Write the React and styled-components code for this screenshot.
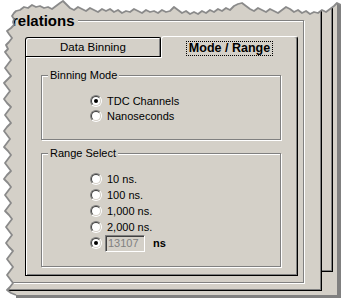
import React from 'react';
import styled, { createGlobalStyle } from 'styled-components';

const face = '#d4d0c8';

const GlobalStyle = createGlobalStyle`
  html, body {
    margin: 0;
    padding: 0;
    background: #fff;
  }
  body {
    font-family: "Liberation Sans", Arial, sans-serif;
    color: #000;
  }
`;

// jagged edge of the torn screenshot
const topEdge = [
  [341, 5], [337, 3], [334, 6], [330, 9], [326, 12], [322, 10], [318, 13], [314, 12], [310, 14],
  [306, 11], [302, 13], [298, 10], [294, 12], [290, 9], [286, 7], [282, 10], [278, 13], [274, 11],
  [270, 9], [266, 12], [262, 10], [258, 8], [254, 11], [250, 9], [246, 6], [242, 3], [238, 4],
  [234, 6], [230, 10], [226, 8], [222, 11], [218, 9], [214, 12], [210, 10], [206, 13], [202, 11],
  [198, 14], [194, 12], [190, 14], [186, 11], [182, 13], [178, 10], [174, 7], [170, 11], [166, 12],
  [162, 10], [158, 13], [154, 11], [150, 12], [146, 10], [142, 13], [138, 11], [134, 9], [130, 12],
  [126, 11], [122, 13], [118, 10], [114, 12], [110, 9], [106, 11], [102, 9], [98, 12], [94, 10],
  [90, 8], [86, 11], [82, 9], [78, 7], [74, 10], [70, 8], [66, 4], [63, 1], [60, 3], [56, 6],
  [52, 9], [48, 7], [44, 8], [40, 6], [36, 7], [32, 5], [28, 8], [24, 7], [20, 10], [16, 11], [14, 13],
];

const leftEdge = [
  [12, 16], [14, 19], [13, 22], [14, 25], [11, 28], [7, 31], [9, 34], [12, 38], [9, 42], [6, 45], [8, 49],
  [5, 52], [8, 56], [11, 60], [8, 64], [5, 68], [8, 72], [11, 76], [8, 79], [4, 83], [7, 87],
  [10, 91], [7, 95], [4, 99], [7, 103], [11, 107], [8, 111], [5, 115], [8, 119], [11, 123],
  [7, 127], [4, 131], [7, 135], [10, 139], [7, 143], [4, 147], [8, 151], [11, 155], [8, 159],
  [5, 163], [8, 167], [11, 171], [7, 175], [4, 179], [8, 183], [11, 187], [8, 191], [5, 195],
  [8, 199], [11, 203], [8, 207], [5, 211], [9, 215], [12, 219], [9, 223], [6, 227], [9, 231],
  [12, 235], [9, 239], [6, 243], [9, 247], [13, 251], [10, 255], [7, 259], [10, 263], [13, 267],
  [10, 271], [7, 275], [10, 279], [13, 283], [10, 287], [7, 290], [11, 293], [16, 295],
];

const edge = [...topEdge, ...leftEdge];
const pts = edge.map(([x, y]) => `${x},${y}`).join(' ');
const fillPath = `M0,0 L341,0 L${edge.map(([x, y]) => `${x},${y}`).join(' L')} L16,298 L0,298 Z`;

const Desk = styled.div`
  position: relative;
  width: 341px;
  height: 298px;
  overflow: hidden;
  background: #fff;
`;

const Paper = styled.div`
  box-sizing: border-box;
  width: 341px;
  height: 298px;
  background: ${face};
  border-right: 4px solid #808080;
  border-bottom: 3px solid #808080;
  display: grid;
  align-items: start;
  justify-items: start;
`;

const Window = styled.div`
  grid-area: 1 / 1;
  box-sizing: border-box;
  width: ${p => p.$w}px;
  height: ${p => p.$h}px;
  background: ${face};
  border-right: 1px solid #000;
  border-bottom: 1px solid #000;
  box-shadow: inset -1px -1px #808080;
  display: flex;
  flex-direction: column;
  align-items: flex-start;
`;

const Frame = styled.div`
  box-sizing: border-box;
  margin: 20px 0 0 -6px;
  width: 310px;
  height: 263px;
  border: 1px solid #808080;
  box-shadow: inset 1px 1px #fff, 1px 1px #fff;
  display: flex;
  flex-direction: column;
  align-items: flex-start;
`;

const FrameTitle = styled.div`
  margin: -9px 0 0 14px;
  padding: 0 3px;
  background: ${face};
  font-size: 15px;
  font-weight: bold;
  line-height: 17px;
`;

const Tabs = styled.div`
  margin: 7px 0 0 30px;
  width: 273px;
  height: 240px;
  display: flex;
  flex-direction: column;
`;

const TabStrip = styled.div`
  height: 20px;
  display: flex;
  align-items: flex-end;
`;

const Tab = styled.div`
  box-sizing: border-box;
  display: flex;
  align-items: center;
  justify-content: center;
  background: ${face};
  font-size: 11.5px;
  width: 136px;
  height: 19px;
  border: 1px solid #000;
  border-bottom: none;
  border-radius: 3px 2px 0 0;
  box-shadow: inset 1px 1px #fff, inset -1px 0 #808080;
`;

const ActiveTab = styled.div`
  box-sizing: border-box;
  position: relative;
  z-index: 1;
  display: flex;
  align-items: center;
  justify-content: center;
  padding-top: 1px;
  width: 137px;
  height: 22px;
  margin-bottom: -2px;
  background: ${face};
  border-top: 1px solid #fff;
  border-left: 1px solid #fff;
  border-right: 1px solid #000;
  border-radius: 3px 3px 0 0;
  box-shadow: inset -1px 0 #808080;
  font-size: 12.5px;
  font-weight: bold;
`;

const Focus = styled.span`
  padding: 0 2px;
  line-height: 13px;
  outline: 1px dotted #000;
`;

const Panel = styled.div`
  box-sizing: border-box;
  flex: 1;
  border: 1px solid #000;
  box-shadow: inset 1px 1px #fff, inset -1px -1px #808080;
  padding: 18px 0 0 15px;
  display: flex;
  flex-direction: column;
  gap: 13px;
`;

const Group = styled.div`
  box-sizing: border-box;
  width: 240px;
  height: ${p => p.$h}px;
  border: 1px solid #808080;
  box-shadow: inset 1px 1px #fff, 1px 1px #fff;
  display: flex;
  flex-direction: column;
  align-items: flex-start;
`;

const GroupTitle = styled.div`
  margin: -7px 0 0 6px;
  padding: 0 2px;
  background: ${face};
  font-size: 11px;
  line-height: 13px;
`;

const Options = styled.div`
  margin-top: ${p => p.$top}px;
  padding-left: 48px;
  display: flex;
  flex-direction: column;
`;

const Row = styled.div`
  height: ${p => p.$h}px;
  display: flex;
  align-items: center;
  font-size: 11px;
`;

const RadioOuter = styled.span`
  box-sizing: border-box;
  width: 12px;
  height: 12px;
  flex: none;
  border-radius: 50%;
  border: 1px solid;
  border-color: #808080 #fff #fff #808080;
  display: flex;
`;

const RadioInner = styled.span`
  box-sizing: border-box;
  flex: 1;
  border-radius: 50%;
  border: 1px solid;
  border-color: #404040 ${face} ${face} #404040;
  background: #fff;
  display: flex;
  align-items: center;
  justify-content: center;
`;

const Dot = styled.span`
  width: 4px;
  height: 4px;
  border-radius: 50%;
  background: #000;
`;

const RadioText = styled.span`
  margin-left: 5px;
`;

const Field = styled.span`
  box-sizing: border-box;
  margin-left: 3px;
  width: 40px;
  height: 17px;
  border: 1px solid;
  border-color: #808080 #fff #fff #808080;
  box-shadow: inset 1px 1px #404040, inset -1px -1px ${face};
  background: ${face};
  color: #808080;
  font-size: 11px;
  line-height: 15px;
  padding-left: 2px;
`;

const Unit = styled.span`
  margin-left: 8px;
  font-weight: bold;
`;

const Torn = styled.svg`
  position: absolute;
  left: 0;
  top: 0;
  pointer-events: none;
`;

const Radio = ({ checked }) => (
  <RadioOuter>
    <RadioInner>{checked && <Dot />}</RadioInner>
  </RadioOuter>
);

const Option = ({ checked, label, h }) => (
  <Row $h={h}>
    <Radio checked={checked} />
    <RadioText>{label}</RadioText>
  </Row>
);

export default function App() {
  return (
    <>
      <GlobalStyle />
      <Desk>
        <Paper>
          <Window $w={333} $h={272} />
          <Window $w={322} $h={291}>
            <Frame>
              <FrameTitle>relations</FrameTitle>
              <Tabs>
                <TabStrip>
                  <Tab>Data Binning</Tab>
                  <ActiveTab>
                    <Focus>Mode / Range</Focus>
                  </ActiveTab>
                </TabStrip>
                <Panel>
                  <Group $h={65}>
                    <GroupTitle>Binning Mode</GroupTitle>
                    <Options $top={11}>
                      <Option h={15} checked label="TDC Channels" />
                      <Option h={15} label="Nanoseconds" />
                    </Options>
                  </Group>
                  <Group $h={114}>
                    <GroupTitle>Range Select</GroupTitle>
                    <Options $top={11}>
                      <Option h={16} label="10 ns." />
                      <Option h={16} label="100 ns." />
                      <Option h={16} label="1,000 ns." />
                      <Option h={16} label="2,000 ns." />
                      <Row $h={16}>
                        <Radio checked />
                        <Field>13107</Field>
                        <Unit>ns</Unit>
                      </Row>
                    </Options>
                  </Group>
                </Panel>
              </Tabs>
            </Frame>
          </Window>
        </Paper>
        <Torn width="341" height="298" viewBox="0 0 341 298">
          <path d={fillPath} fill="#fff" />
          <polyline points={pts} fill="none" stroke="#8a8a8a" strokeWidth="1.8" strokeLinejoin="round" />
        </Torn>
      </Desk>
    </>
  );
}
